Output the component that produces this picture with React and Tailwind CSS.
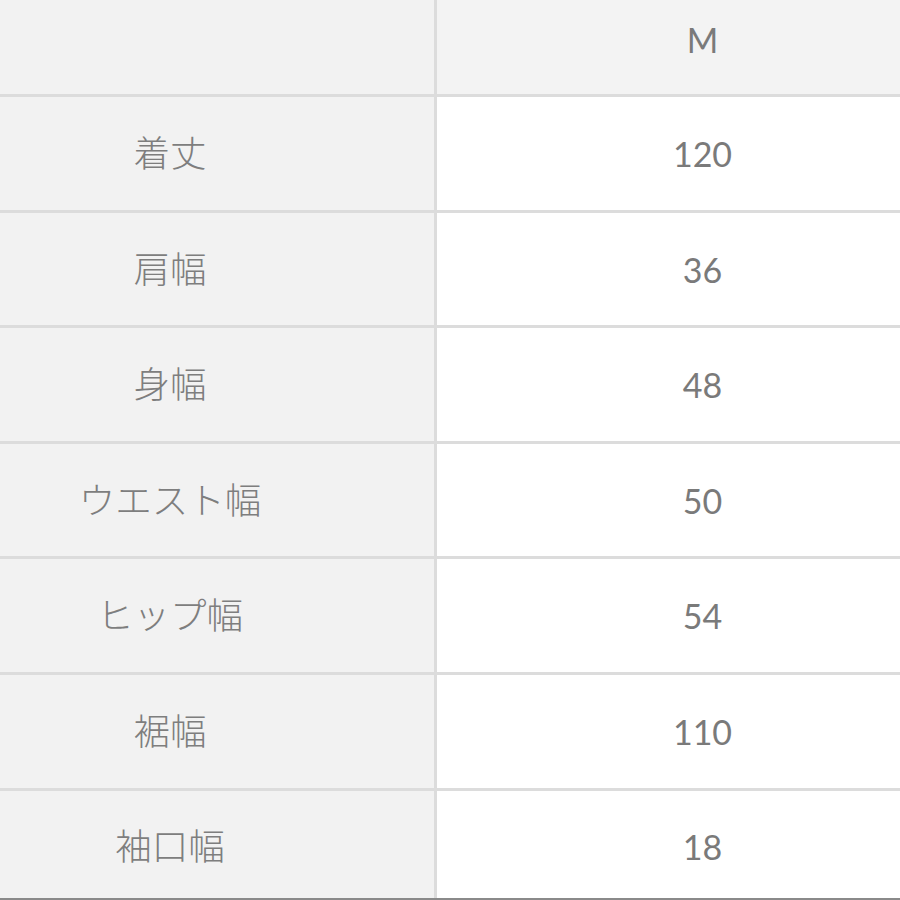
const rows = [
  { label: '着丈', value: '120', h: 'h-[116px]' },
  { label: '肩幅', value: '36', h: 'h-[115px]' },
  { label: '身幅', value: '48', h: 'h-[116px]' },
  { label: 'ウエスト幅', value: '50', h: 'h-[115px]' },
  { label: 'ヒップ幅', value: '54', h: 'h-[116px]' },
  { label: '裾幅', value: '110', h: 'h-[116px]' },
]

const font = { fontFamily: 'Lato, "Noto Sans CJK JP", sans-serif' }

export default function App() {
  return (
    <div className="w-[900px] h-[900px] overflow-hidden bg-[#f2f2f2] text-[#7a7a7a] text-[34px]" style={font}>
      <div className="flex h-[97px] border-b-[3px] border-[#dcdcdc]">
        <div className="w-[437px] border-r-[3px] border-[#dcdcdc] bg-[#f2f2f2]" />
        <div className="flex-1 flex items-center justify-center pl-[68px] pb-[16px] bg-[#f3f3f3]">M</div>
      </div>
      {rows.map((row) => (
        <div key={row.label} className={`flex ${row.h} border-b-[3px] border-[#dcdcdc]`}>
          <div className="w-[437px] border-r-[3px] border-[#dcdcdc] bg-[#f2f2f2] flex items-center justify-center pr-[94px] text-[36.5px] text-[#7e7e7e] font-light">
            {row.label}
          </div>
          <div className="flex-1 flex items-center justify-center pl-[68px] bg-white">{row.value}</div>
        </div>
      ))}
      <div className="flex h-[109px] border-b-[2px] border-[#8a8a8a]">
        <div className="w-[437px] border-r-[3px] border-[#dcdcdc] bg-[#f2f2f2] flex items-center justify-center pr-[94px] pt-[3px] text-[36.5px] text-[#7e7e7e] font-light">
          袖口幅
        </div>
        <div className="flex-1 flex items-center justify-center pl-[68px] pt-[3px] bg-white">18</div>
      </div>
    </div>
  )
}
